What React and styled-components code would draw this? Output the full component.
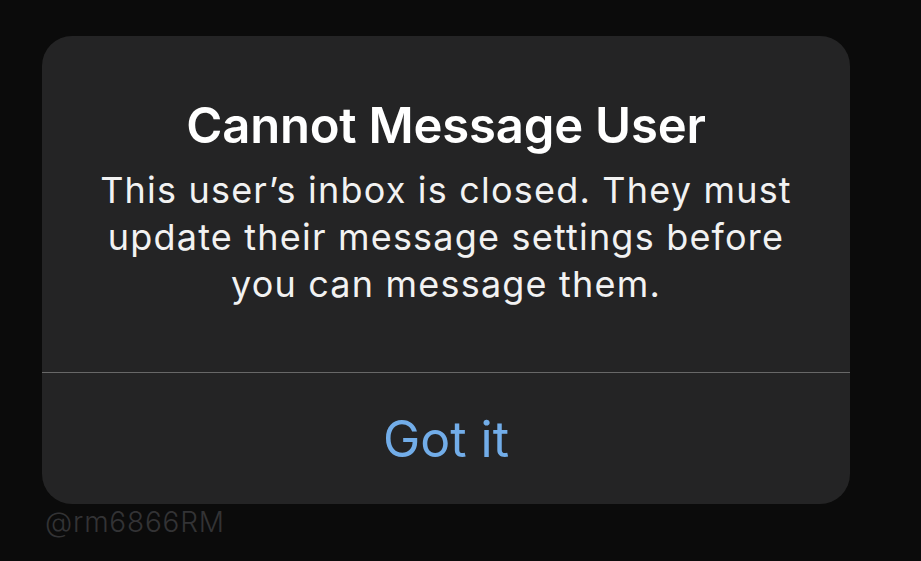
import React from "react";
import styled, { createGlobalStyle } from "styled-components";

const Global = createGlobalStyle`
  html, body { margin: 0; padding: 0; background: #0b0b0b; }
  body { font-family: Inter, "Noto Sans", "Liberation Sans", sans-serif; }
`;

const Screen = styled.div`
  width: 921px;
  height: 561px;
  background: #0b0b0b;
  box-sizing: border-box;
  padding: 36px 71px 0 42px;
  display: flex;
  flex-direction: column;
  overflow: hidden;
`;

const Alert = styled.div`
  background: #242425;
  border-radius: 30px;
  display: flex;
  flex-direction: column;
  overflow: hidden;
`;

const Content = styled.div`
  padding: 62px 20px 64px;
  display: flex;
  flex-direction: column;
  align-items: center;
  text-align: center;
`;

const Title = styled.h1`
  margin: 0;
  font-size: 49px;
  line-height: 56px;
  font-weight: 600;
  color: #ffffff;
  letter-spacing: -0.2px;
`;

const Message = styled.p`
  margin: 13px 0 0;
  font-size: 36px;
  line-height: 47px;
  font-weight: 400;
  color: #f2f2f2;
  letter-spacing: 1.2px;
  max-width: 720px;
`;

const Divider = styled.div`
  height: 1px;
  background: #686868;
`;

const ActionButton = styled.button`
  all: unset;
  height: 131px;
  display: flex;
  align-items: center;
  justify-content: center;
  font-family: Inter, "Noto Sans", "Liberation Sans", sans-serif;
  font-size: 50px;
  font-weight: 400;
  color: #72ade9;
  cursor: pointer;
`;

const Watermark = styled.div`
  margin: 3px 0 0 3px;
  font-family: Inter, "Noto Sans", "Liberation Sans", sans-serif;
  font-size: 28px;
  line-height: 30px;
  font-weight: 300;
  letter-spacing: 0.8px;
  color: #333335;
`;

export default function App() {
  return (
    <>
      <Global />
      <Screen>
        <Alert>
          <Content>
            <Title>Cannot Message User</Title>
            <Message>
              This user’s inbox is closed. They must update their message settings before you can message them.
            </Message>
          </Content>
          <Divider />
          <ActionButton>Got it</ActionButton>
        </Alert>
        <Watermark>@rm6866RM</Watermark>
      </Screen>
    </>
  );
}
